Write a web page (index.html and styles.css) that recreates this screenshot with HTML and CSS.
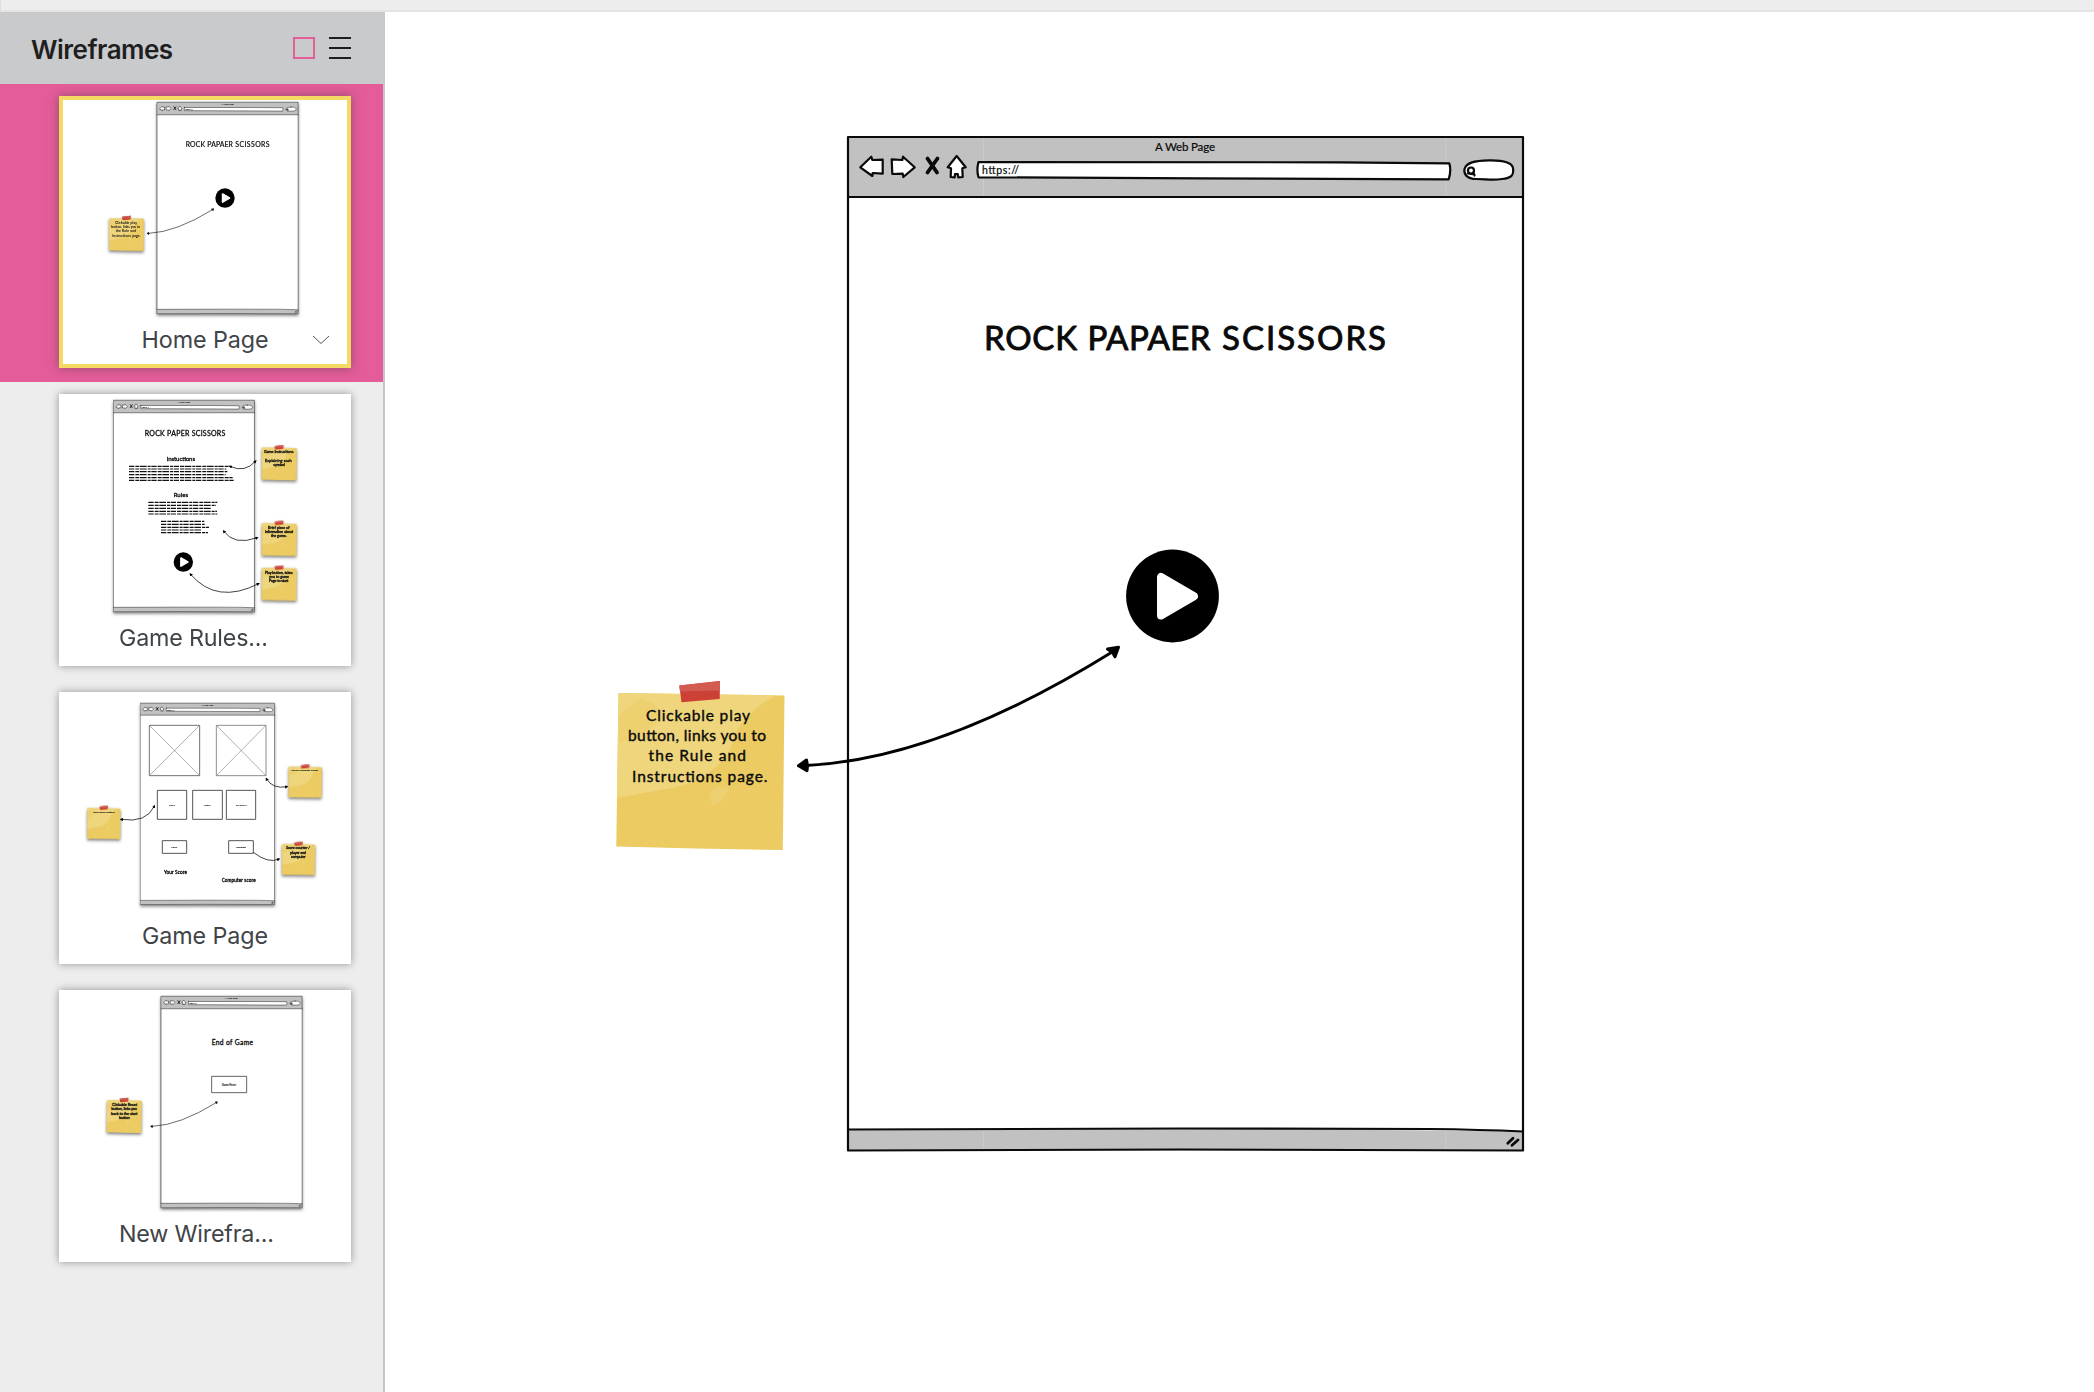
FILE: index.html
```html
<!DOCTYPE html>
<html lang="en">
<head>
<meta charset="utf-8">
<title>Wireframes</title>
<link rel="stylesheet" href="styles.css">
</head>
<body>
<svg class="defs" width="0" height="0" aria-hidden="true">
  <defs>
    <g id="browser">
      <path fill="#fff" d="M848 137H1523V1150H848Z"/>
      <path fill="#c1c1c1" d="M848 137H1523V197H848ZM848 1129.5L1180 1128.5L1523 1131V1150.5H848Z"/>
      <path stroke="#cacaca" fill="none" d="M983.5 138V196M1446 138V196M1446 1131V1150M983.5 1131V1150"/>
      <g class="ink">
        <path d="M848 137H1523V1150.5L1180 1149.5L848 1150.5Z"/>
        <path d="M848 197H1523M848 1129.5L1180 1128.5L1430 1129Q1480 1129.5 1523 1131.5"/>
        <g fill="#fff">
          <path d="M860.3 167.3L871.3 156.7L872.3 160L882.7 159.7V173.7L872.7 173L872.3 176Z"/>
          <path d="M891.7 159.3L902.3 160L903 156.7L914.7 167.3L903.3 177L902.7 173.7L892.3 174Z"/>
          <path d="M956.7 156L965.7 167.3L962.3 168.3L962.7 177L958.3 177.3L957.7 174H955L954.7 177.3L950.7 177L951 168.3L947.7 167.3Z"/>
          <path d="M978.5 162L1340 162.3L1449.3 163.3Q1451.5 170 1448.7 179.3L1200 178.3L978.5 177.3Q976.3 170 978.5 162Z"/>
          <path d="M1489 160.3C1505 160 1512 163 1513 168C1514 176 1511 178 1502 179C1492 180.5 1486 179 1476 179C1467 179 1463.500 174 1464.500 169C1466 163 1473 160.500 1489 160.300Z"/>
        </g>
        <circle cx="1471" cy="170.500" r="3"/>
        <path d="M1473.500 172.500L1474.500 175.500M1468 173.500L1474.500 174.500"/>
        <path class="heavy" d="M927.5 158.500L937 172.500M937.500 158.500L927.500 172.500"/>
        <path class="grip" d="M1507.800 1143.300L1513 1138.300M1512 1145.300L1518 1140"/>
      </g>
      <text class="hand" x="1155" y="151.300" font-size="11.500" textLength="60">A Web Page</text>
      <text class="hand" x="982" y="174" font-size="10.500" textLength="37">https://</text>
    </g>
    <g id="note">
      <path fill="#ebcb62" d="M618.500 693L784.500 695.500L782.800 850L696 848.500L616.300 846.500Z"/>
      <path fill="#efd57c" d="M618.500 693L776 695.300Q745 712 735 735Q730 758 712 770Q700 784 660 790L617 798Z"/>
      <path fill="#ebcb62" opacity=".45" d="M640 698Q668 706 656 724Q640 738 619 742L618.800 715Z"/>
      <path fill="#efd57c" opacity=".6" d="M712 790Q720 784 729 789Q724 800 714 806Q707 800 712 790Z"/>
      <path fill="#cc4035" d="M679.300 685.500L720 681L719.700 699L681.500 702.300Z"/>
      <path fill="#d25c50" d="M679.300 685.500L720 681V690.500L680 691.500Z"/>
    </g>
    <g id="play">
      <circle cx="1172.500" cy="596" r="46.400"/>
      <path fill="#fff" stroke="#fff" stroke-width="8" stroke-linejoin="round" d="M1161 577V615.500L1194 596.200Z"/>
    </g>
    <g id="link">
      <path class="stroke" d="M806 765.500Q940 759 1113 651.500"/>
      <path class="head" d="M798.500 765.800L806.500 760L807.500 765.800L807 770.700Z"/>
      <path class="head" d="M1107.500 649L1118.500 647.300L1115 656.800L1112.500 652.500Z"/>
    </g>
    <g id="home-screen">
      <text class="hand title" y="350" font-size="33"><tspan x="984" textLength="93">ROCK</tspan> <tspan x="1087.500" textLength="123">PAPAER</tspan> <tspan x="1222" textLength="164">SCISSORS</tspan></text>
      <use href="#play"/>
      <use href="#link"/>
    </g>
    <g id="home-note">
      <use href="#note"/>
      <g class="hand note-text" font-size="15.500">
        <text x="646" y="720.500" textLength="104">Clickable play</text>
        <text x="628" y="740.700" textLength="138">button, links you to</text>
        <text x="648.500" y="760.700" textLength="97.500">the Rule and</text>
        <text x="632" y="781.500" textLength="135.500">Instructions page.</text>
      </g>
    </g>
    <marker id="tip" viewBox="0 0 10 10" refX="6" refY="5" markerWidth="10" markerHeight="10" markerUnits="userSpaceOnUse" orient="auto-start-reverse"><path d="M0 0L10 5L0 10Z"/></marker>
  </defs>
</svg>

<div class="app">
  <div class="topbar"></div>
  <div class="workspace">
    <aside class="sidebar">
      <header class="sidebar-head">
        <h1 class="sidebar-title">Wireframes</h1>
        <svg class="view-icons" width="58" height="22" viewBox="0 0 58 22">
          <rect x="1" y="1" width="20" height="20" fill="none" stroke="#e55c9b" stroke-width="2"/>
          <path stroke="#1d1d1d" stroke-width="2" d="M36 1H58M36 11H58M36 21H58"/>
        </svg>
      </header>
      <nav class="pages">
        <div class="page selected">
          <div class="card">
            <svg class="thumb" viewBox="177 288 876 672">
              <g class="shadowed"><g transform="translate(-59 221) scale(.626)"><use href="#browser"/></g></g>
              <g class="shadowed"><g transform="translate(-59 221) scale(.626)"><use href="#home-note"/></g></g>
              <g transform="translate(-59 221) scale(.626)"><use href="#home-screen"/></g>
            </svg>
            <div class="caption"><span>Home Page</span></div>
            <svg class="chevron" width="18" height="10" viewBox="0 0 18 10"><path fill="none" stroke="#555" stroke-width="1" d="M1 1L9 8.500L17 1"/></svg>
          </div>
        </div>
        <div class="page">
          <div class="card">
            <svg class="thumb" viewBox="27 27 876 672">
              <g class="shadowed"><g transform="translate(-340 -40) scale(.626)"><use href="#browser"/></g></g>
              <g class="shadowed">
                <g transform="translate(249 -246) scale(.626)"><use href="#note"/></g>
                <g transform="translate(249 -19) scale(.626)"><use href="#note"/></g>
                <g transform="translate(249 115) scale(.626)"><use href="#note"/></g>
              </g>
              <g transform="translate(-334 158) scale(.626)"><use href="#play"/></g>
              <g class="hand">
                <text class="small-title" x="284" y="153" font-size="21" textLength="242">ROCK PAPER SCISSORS</text>
                <text class="small-title" x="350" y="227" font-size="18" textLength="85">Instuctions</text>
                <text class="small-title" x="371" y="337" font-size="18" textLength="43">Rules</text>
                <g class="mini" font-size="11.500">
                  <text x="642" y="205" textLength="88">Game Instructions</text>
                  <text x="645" y="230" textLength="80">Explaining each</text>
                  <text x="670" y="243" textLength="35">symbol</text>
                  <text x="654" y="431" textLength="65">Brief piece of</text>
                  <text x="645" y="444" textLength="84">information about</text>
                  <text x="663" y="457" textLength="47">the game.</text>
                  <text x="645" y="566" textLength="83">Play button, takes</text>
                  <text x="657" y="579" textLength="60">you to game</text>
                  <text x="657" y="591" textLength="58">Page to start</text>
                </g>
              </g>
              <g class="greek">
                <path d="M237 244H542M237 252H529M237 260H532M237 269H527M237 278H548M237 286H551"/>
                <path d="M295 352H502M295 361H498M295 370H485M295 379H501M295 387H502"/>
                <path d="M333 409H463M333 418H464M333 427H477M333 435H455M333 443H474"/>
              </g>
              <g class="arrows">
                <path d="M540 244Q585 265 617 228"/>
                <path d="M521 438Q552 483 622 458"/>
                <path d="M421 567Q500 660 626 596"/>
              </g>
            </svg>
            <div class="caption"><span>Game Rules...</span></div>
          </div>
        </div>
        <div class="page">
          <div class="card">
            <svg class="thumb" viewBox="27 36 876 672">
              <g class="shadowed"><g transform="translate(-234 -12) scale(.596)"><use href="#browser"/></g></g>
              <g class="shadowed">
                <g transform="translate(-256 -29) scale(.596)"><use href="#note"/></g>
                <g transform="translate(348 -153) scale(.596)"><use href="#note"/></g>
                <g transform="translate(328 79) scale(.596)"><use href="#note"/></g>
              </g>
              <g fill="none" stroke="#555" stroke-width="2.500">
                <path d="M298 136H449V287H298Z"/>
                <path stroke="#777" d="M499 136H648V287H499Z"/>
                <path stroke="#888" stroke-width="2" d="M298 136L449 287M449 136L298 287M499 136L648 287M648 136L499 287"/>
                <path stroke="#333" d="M322 331H410V418H322ZM428 331H517V418H428ZM529 331H617V418H529ZM337 482H410V520H337ZM536 482H610V520H536Z"/>
              </g>
              <g class="hand">
                <g class="tiny" font-size="8">
                  <text x="357" y="378" textLength="18">Rock</text>
                  <text x="462" y="378" textLength="20">Paper</text>
                  <text x="557" y="378" textLength="33">Scissors</text>
                  <text x="364" y="503" textLength="18">Player</text>
                  <text x="558" y="503" textLength="30">Computer</text>
                  <text x="129" y="398" textLength="65">Game three buttons</text>
                  <text x="724" y="274" textLength="80">Picks or computer choice</text>
                </g>
                <g class="mini" font-size="11.500">
                  <text x="708" y="508" textLength="72">Score counter /</text>
                  <text x="721" y="521" textLength="47">player and</text>
                  <text x="723" y="534" textLength="44">computer</text>
                </g>
                <text class="small-title" x="342" y="581" font-size="14" textLength="69">Your Score</text>
                <text class="small-title" x="515" y="607" font-size="14" textLength="102">Computer score</text>
              </g>
              <g class="arrows">
                <path d="M213 418Q290 430 313 378"/>
                <path d="M649 296Q668 328 711 320"/>
                <path class="one-way" d="M610 517Q655 552 687 537"/>
              </g>
            </svg>
            <div class="caption"><span>Game Page</span></div>
          </div>
        </div>
        <div class="page">
          <div class="card">
            <svg class="thumb" viewBox="27 30 876 672">
              <g class="shadowed"><g transform="translate(-197 -37) scale(.626)"><use href="#browser"/></g></g>
              <g class="shadowed"><g transform="translate(-216 -73) scale(.626)"><use href="#note"/></g></g>
              <g transform="translate(-198 -40) scale(.626)"><use href="#link"/></g>
              <path fill="none" stroke="#444" stroke-width="2.500" d="M485 289H590V338H485Z"/>
              <g class="hand">
                <text class="small-title" x="485" y="194" font-size="20" textLength="124">End of Game</text>
                <text class="tiny" x="515" y="317" font-size="9" textLength="43">Game Reset</text>
                <g class="mini" font-size="11.500">
                  <text x="186" y="378" textLength="75">Clickable Reset</text>
                  <text x="184" y="391" textLength="77">button, links you</text>
                  <text x="183" y="404" textLength="79">back to the start</text>
                  <text x="207" y="416" textLength="32">button</text>
                </g>
              </g>
            </svg>
            <div class="caption"><span>New Wirefra...</span></div>
          </div>
        </div>
      </nav>
    </aside>
    <main class="canvas">
      <svg class="drawing" viewBox="385 12 1709 1380">
        <use href="#browser"/>
        <use href="#home-note"/>
        <use href="#home-screen"/>
      </svg>
    </main>
  </div>
</div>
</body>
</html>
```
FILE: styles.css
```css
* { box-sizing: border-box; }
body { margin: 0; background: #fff; font-family: Inter, "Liberation Sans", sans-serif; }
svg { display: block; }
.defs { position: absolute; }

.app { display: flex; flex-direction: column; width: 100%; height: 100vh; overflow: hidden; }
.topbar { flex: none; height: 12px; background: #ededed; border-bottom: 2px solid #e4e4e4; border-left: 1px solid #dedede; }
.workspace { flex: 1; display: flex; min-height: 0; }

.sidebar { flex: none; width: 385px; display: flex; flex-direction: column; background: #ededed; }
.sidebar-head {
  flex: none; height: 72px; padding: 0 34px 0 31px;
  display: flex; align-items: center; justify-content: space-between;
  background: #c9cacc;
}
.sidebar-title { margin: 3px 0 0; font-size: 26px; line-height: 32px; font-weight: 600; letter-spacing: -.5px; color: #1f1f1f; }
.pages { flex: 1; border-right: 2px solid #c5c6c8; }
.page { height: 298px; padding: 12px 32px 14px 59px; }
.selected { background: #e55c9b; }
.card { position: relative; width: 292px; height: 272px; background: #fff; box-shadow: 0 0 8px rgba(0, 0, 0, .38); }
.selected .card { box-shadow: inset 0 0 0 4px #f4d965, 0 0 10px rgba(60, 60, 60, .5); }
.thumb { width: 292px; height: 224px; }
.caption { display: flex; width: 172px; margin: 0 auto; color: #3f4448; font-size: 23.3px; line-height: 39px; letter-spacing: -.1px; white-space: nowrap; justify-content: center; }
.page:nth-child(even) .caption { justify-content: flex-start; letter-spacing: -.2px; }
.chevron { position: absolute; right: 21px; bottom: 23px; }

.canvas { flex: 1; min-width: 0; background: #fff; }
.drawing { width: 1709px; height: 1380px; }

.ink { fill: none; stroke: #0a0a0a; stroke-width: 2.2; stroke-linejoin: round; stroke-linecap: round; }
.heavy { stroke-width: 3.8; }
.grip { stroke-width: 2.8; }
.hand { font-family: Lato, "Open Sans", sans-serif; font-weight: 400; fill: #0a0a0a; stroke: #0a0a0a; stroke-width: .2; stroke-linejoin: round; }
.title { stroke-width: .9; }
.note-text { stroke-width: .4; }
.small-title { stroke-width: .9; }
.mini { stroke-width: .8; }
.tiny { stroke-width: .2; }
.stroke { fill: none; stroke: #000; stroke-width: 2.8; }
.head { fill: #000; stroke: #000; stroke-width: 3; stroke-linejoin: round; }

.shadowed { filter: drop-shadow(0 5px 4px rgba(0, 0, 0, .5)); }
.arrows { fill: none; stroke: #111; stroke-width: 2.4; }
.arrows path { marker-start: url(#tip); marker-end: url(#tip); }
.arrows .one-way { marker-start: none; }
.greek { fill: none; stroke: #111; stroke-width: 3.4; stroke-dasharray: 16 3 12 2 20 3 9 2; }
```
